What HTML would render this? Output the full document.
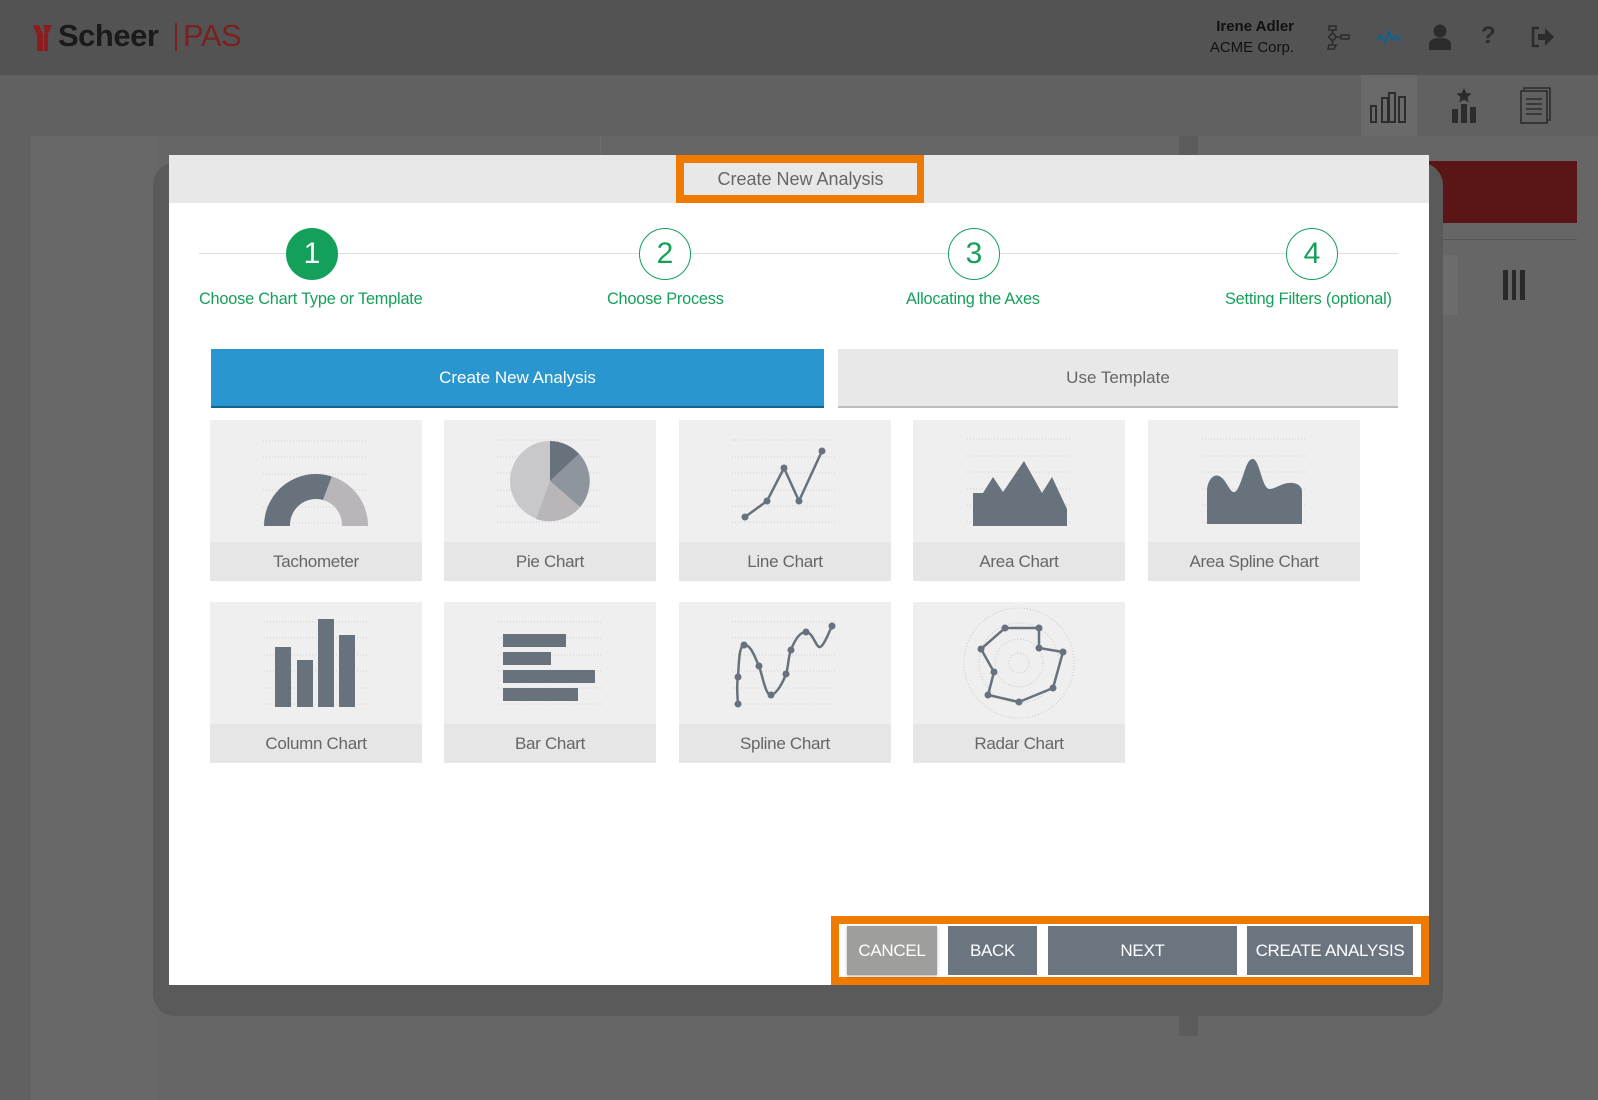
<!DOCTYPE html>
<html><head><meta charset="utf-8"><style>
*{margin:0;padding:0;box-sizing:border-box}
body{width:1598px;height:1100px;overflow:hidden;background:#616161;font-family:"Liberation Sans",Arial,sans-serif;position:relative}
.abs{position:absolute}
.hdr{left:0;top:0;width:1598px;height:75px;background:#535353}
.card{position:absolute;width:212px;height:161px;background:#efefef}
.card svg{position:absolute;left:0;top:0}
.card .lb{position:absolute;left:0;top:122px;width:212px;height:39px;background:#e6e6e6;color:#666;font-size:17px;text-align:center;line-height:39px;letter-spacing:-0.3px}
.step{position:absolute;width:52px;height:52px;border-radius:50%;border:1.5px solid #14a05a;background:#fff;color:#14a05a;font-size:30px;text-align:center;line-height:49px}
.sl{position:absolute;top:290px;color:#14a05a;font-size:16.3px;white-space:nowrap;letter-spacing:-0.2px}
.btn{position:absolute;top:926px;height:49px;background:#6b7580;color:#fff;font-size:17px;text-align:center;line-height:49px;letter-spacing:-0.3px}
</style></head><body>
<div class="abs hdr"></div>
<svg class="abs" style="left:33px;top:25px" width="26" height="26" viewBox="0 0 26 26"><path d="M0 0h6l4 9V26H4V11z" fill="#8a1e1e"/><path d="M10 0h5l-3 7z" fill="#8a1e1e"/><path d="M14 0h5l-4 9v17h-4V9z" fill="#8a1e1e"/></svg>
<div class="abs" style="left:58px;top:18px;font-size:31px;font-weight:bold;color:#1a1a1a;letter-spacing:-0.5px">Scheer</div>
<div class="abs" style="left:175px;top:23px;width:2px;height:28px;background:#7a2020"></div>
<div class="abs" style="left:183px;top:18px;font-size:31px;color:#7a2020;letter-spacing:-0.5px">PAS</div>
<div class="abs" style="left:1150px;top:18px;width:144px;text-align:right;font-size:15px;font-weight:bold;color:#111">Irene Adler</div>
<div class="abs" style="left:1150px;top:39px;width:144px;text-align:right;font-size:15px;color:#111">ACME Corp.</div>
<svg class="abs" style="left:1325px;top:24px" width="28" height="28" viewBox="0 0 28 28" fill="none" stroke="#2c2c2c" stroke-width="1.6"><rect x="4" y="2" width="7" height="4"/><path d="M7.5 6v3M7.5 9l4 4-4 4-4-4z M11.5 13h4"/><rect x="16" y="11" width="8" height="4"/><path d="M7.5 17v4"/><path d="M4 21h7l-2 4H3z"/></svg>
<svg class="abs" style="left:1376px;top:28px" width="26" height="18" viewBox="0 0 26 18" fill="none" stroke="#1d5e86" stroke-width="2.6"><path d="M1 12l4-5 4 7 4-10 3 8 3-4 3 3 3-1"/></svg>
<svg class="abs" style="left:1429px;top:24px" width="22" height="26" viewBox="0 0 22 26" fill="#2c2c2c"><circle cx="11" cy="7" r="6.5"/><path d="M0 26v-5c0-5 4-7 11-7s11 2 11 7v5z"/></svg>
<div class="abs" style="left:1481px;top:22px;font-size:24px;font-weight:bold;color:#2c2c2c">?</div>
<svg class="abs" style="left:1530px;top:26px" width="24" height="22" viewBox="0 0 24 22"><path d="M9 2H3v18h6" fill="none" stroke="#2c2c2c" stroke-width="2.5"/><path d="M8 8h7V2l9 9-9 9v-6H8z" fill="#2c2c2c"/></svg>
<div class="abs" style="left:1361px;top:75px;width:56px;height:61px;background:#6a6a6a"></div>
<svg class="abs" style="left:1370px;top:91px" width="38" height="32" viewBox="0 0 38 32" fill="none" stroke="#2c2c2c" stroke-width="2"><rect x="1" y="15" width="5" height="16"/><rect x="12" y="7" width="6" height="24"/><rect x="19" y="2" width="6" height="29"/><rect x="29" y="6" width="6" height="25"/></svg>
<svg class="abs" style="left:1449px;top:88px" width="30" height="36" viewBox="0 0 30 36" fill="#2c2c2c"><path d="M15 0l2.3 5 5.3.5-4 3.6 1.2 5.3L15 11.7l-4.8 2.7 1.2-5.3-4-3.6 5.3-.5z"/><rect x="3" y="21" width="6" height="14"/><rect x="12" y="16" width="6" height="19"/><rect x="21" y="19" width="6" height="16"/></svg>
<svg class="abs" style="left:1520px;top:86px" width="32" height="38" viewBox="0 0 32 38" fill="none" stroke="#2c2c2c" stroke-width="1.6"><path d="M4 4V2h26v32h-3"/><rect x="1" y="5" width="26" height="32"/><path d="M6 13h16M6 18h16M6 23h16M6 28h16"/></svg>
<div class="abs" style="left:31px;top:136px;width:1567px;height:964px;background:#666"></div>
<div class="abs" style="left:31px;top:136px;width:127px;height:964px;background:#686868"></div>
<div class="abs" style="left:600px;top:136px;width:1px;height:500px;background:#6e6e6e"></div>
<div class="abs" style="left:1179px;top:136px;width:19px;height:900px;background:#5c5c5c"></div>
<div class="abs" style="left:1400px;top:161px;width:177px;height:62px;background:#5a1616"></div>
<div class="abs" style="left:1400px;top:239px;width:177px;height:1px;background:#555"></div>
<div class="abs" style="left:1430px;top:255px;width:28px;height:60px;background:#6c6c6c"></div>
<div class="abs" style="left:1503px;top:270px;width:22px;height:30px;border-left:5px solid #2a2a2a;border-right:5px solid #2a2a2a"></div>
<div class="abs" style="left:1512px;top:270px;width:4px;height:30px;background:#2a2a2a"></div>
<div class="abs" style="left:153px;top:163px;width:1290px;height:853px;border-radius:22px;background:#5a5a5a"></div>
<div class="abs" style="left:169px;top:155px;width:1260px;height:830px;background:#fff"></div>
<div class="abs" style="left:169px;top:155px;width:1260px;height:48px;background:#e8e8e8"></div>
<div class="abs" style="left:676px;top:155px;width:248px;height:48px;background:#ee7b00"></div>
<div class="abs" style="left:684px;top:163px;width:233px;height:32px;background:#e8e8e8;color:#666;font-size:18px;text-align:center;line-height:33px">Create New Analysis</div>
<div class="abs" style="left:199px;top:253px;width:1199px;height:1px;background:#ddd"></div>
<div class="step" style="left:286px;top:228px;background:#14a05a;color:#fff;border-color:#14a05a">1</div>
<div class="step" style="left:639px;top:228px">2</div>
<div class="step" style="left:948px;top:228px">3</div>
<div class="step" style="left:1286px;top:228px">4</div>
<div class="sl" style="left:199px">Choose Chart Type or Template</div>
<div class="sl" style="left:607px">Choose Process</div>
<div class="sl" style="left:906px">Allocating the Axes</div>
<div class="sl" style="left:1225px">Setting Filters (optional)</div>
<div class="abs" style="left:211px;top:349px;width:613px;height:59px;background:#2996cf;border-bottom:2px solid #15648f;color:#fff;font-size:17px;text-align:center;line-height:57px">Create New Analysis</div>
<div class="abs" style="left:838px;top:349px;width:560px;height:59px;background:#e8e8e8;border-bottom:2px solid #bdbdbd;color:#666;font-size:17px;text-align:center;line-height:57px">Use Template</div>
<div class="card" style="left:210px;top:420px"><svg width="212" height="122"><g stroke="#cfcfcf" stroke-dasharray="1 2"><path d="M53 21H157M53 37H157M53 54H157M53 70H157M53 87H157M53 103H157"/></g>
<path d="M54 106A52 52 0 0 1 122 56.5L113 80A26 26 0 0 0 80 106z" fill="#68727c"/><path d="M122 56.5A52 52 0 0 1 158 106H132A26 26 0 0 0 113 80z" fill="#b9b6b9"/></svg><div class="lb">Tachometer</div></div>
<div class="card" style="left:444px;top:420px"><svg width="212" height="122"><g stroke="#cfcfcf" stroke-dasharray="1 2"><path d="M53 20H157M53 37H157M53 53H157M53 70H157M53 86H157M53 102H157"/></g>
<circle cx="106" cy="61" r="40" fill="#c8c7ca"/><path d="M106 61V21A40 40 0 0 1 135 34z" fill="#68727c"/><path d="M106 61L135 34A40 40 0 0 1 136 87z" fill="#8e959c"/><path d="M106 61L136 87A40 40 0 0 1 92 99z" fill="#b9b6b9"/></svg><div class="lb">Pie Chart</div></div>
<div class="card" style="left:679px;top:420px"><svg width="212" height="122"><g stroke="#cfcfcf" stroke-dasharray="1 2"><path d="M53 20H157M53 37H157M53 53H157M53 70H157M53 86H157M53 102H157"/></g>
<path d="M66 97L88 81L105 48L120 81L143 31" fill="none" stroke="#68727c" stroke-width="2.5"/><g fill="#68727c"><circle cx="66" cy="97" r="3.5"/><circle cx="88" cy="81" r="3.5"/><circle cx="105" cy="48" r="3.5"/><circle cx="120" cy="81" r="3.5"/><circle cx="143" cy="31" r="3.5"/></g></svg><div class="lb">Line Chart</div></div>
<div class="card" style="left:913px;top:420px"><svg width="212" height="122"><g stroke="#cfcfcf" stroke-dasharray="1 2"><path d="M54 19H159M54 36H159M54 52H159M54 69H159M54 85H159M54 102H159"/></g>
<path d="M60 106V73H70L80 57L90 72L111 41L129 73L139 57L154 89V106z" fill="#68727c"/></svg><div class="lb">Area Chart</div></div>
<div class="card" style="left:1148px;top:420px"><svg width="212" height="122"><g stroke="#cfcfcf" stroke-dasharray="1 2"><path d="M54 19H159M54 36H159M54 52H159M54 69H159M54 85H159M54 102H159"/></g>
<path d="M59 104V70C60 58 68 50 76 60C82 68 84 76 89 70C96 58 98 38 105 39C112 40 114 70 122 69C130 68 134 62 145 63C152 64 154 68 154 72V104z" fill="#68727c"/></svg><div class="lb">Area Spline Chart</div></div>
<div class="card" style="left:210px;top:602px"><svg width="212" height="122"><g stroke="#cfcfcf" stroke-dasharray="1 2"><path d="M54 20H158M54 36H158M54 53H158M54 69H158M54 86H158M54 102H158"/></g>
<g fill="#68727c"><rect x="65" y="45" width="16" height="60"/><rect x="87" y="58" width="16" height="47"/><rect x="108" y="17" width="16" height="88"/><rect x="129" y="33" width="16" height="72"/></g></svg><div class="lb">Column Chart</div></div>
<div class="card" style="left:444px;top:602px"><svg width="212" height="122"><g stroke="#cfcfcf" stroke-dasharray="1 2"><path d="M54 20H157M54 36H157M54 53H157M54 69H157M54 86H157M54 102H157"/></g>
<g fill="#68727c"><rect x="59" y="32" width="63" height="13"/><rect x="59" y="50" width="48" height="13"/><rect x="59" y="68" width="92" height="13"/><rect x="59" y="86" width="75" height="13"/></g></svg><div class="lb">Bar Chart</div></div>
<div class="card" style="left:679px;top:602px"><svg width="212" height="122"><g stroke="#cfcfcf" stroke-dasharray="1 2"><path d="M53 20H157M53 36H157M53 53H157M53 69H157M53 86H157M53 102H157"/></g>
<path d="M59 102C58 90 58 80 59 75C60 60 60 44 65 43C72 42 76 56 80 64C84 76 87 94 92 93C98 92 104 80 107 72C110 62 109 55 112 48C115 40 120 30 127 30C134 30 137 46 141 45C145 44 150 30 153 24" fill="none" stroke="#68727c" stroke-width="2.5"/><g fill="#68727c"><circle cx="59" cy="102" r="3.5"/><circle cx="59" cy="75" r="3.5"/><circle cx="65" cy="43" r="3.5"/><circle cx="80" cy="64" r="3.5"/><circle cx="92" cy="93" r="3.5"/><circle cx="107" cy="72" r="3.5"/><circle cx="112" cy="48" r="3.5"/><circle cx="127" cy="30" r="3.5"/><circle cx="153" cy="24" r="3.5"/></g></svg><div class="lb">Spline Chart</div></div>
<div class="card" style="left:913px;top:602px"><svg width="212" height="122"><g fill="none" stroke="#c8c8c8" stroke-dasharray="1 2"><circle cx="106" cy="61" r="55"/><circle cx="106" cy="61" r="40"/><circle cx="106" cy="61" r="24"/><circle cx="106" cy="61" r="10"/></g>
<path d="M92 26H126V46L150 50L140 86L106 100L75 93L81 70L68 47z" fill="none" stroke="#68727c" stroke-width="2.5"/><g fill="#68727c"><circle cx="92" cy="26" r="3.5"/><circle cx="126" cy="26" r="3.5"/><circle cx="126" cy="46" r="3.5"/><circle cx="150" cy="50" r="3.5"/><circle cx="140" cy="86" r="3.5"/><circle cx="106" cy="100" r="3.5"/><circle cx="75" cy="93" r="3.5"/><circle cx="81" cy="70" r="3.5"/><circle cx="68" cy="47" r="3.5"/></g></svg><div class="lb">Radar Chart</div></div>
<div class="abs" style="left:831px;top:916px;width:598px;height:69px;border:8px solid #ee7b00;background:#fff"></div>
<div class="btn" style="left:847px;width:90px;background:#9e9e9c;box-shadow:0 1px 3px rgba(0,0,0,.3)">CANCEL</div>
<div class="btn" style="left:948px;width:89px">BACK</div>
<div class="btn" style="left:1048px;width:189px">NEXT</div>
<div class="btn" style="left:1247px;width:166px">CREATE ANALYSIS</div>
</body></html>
